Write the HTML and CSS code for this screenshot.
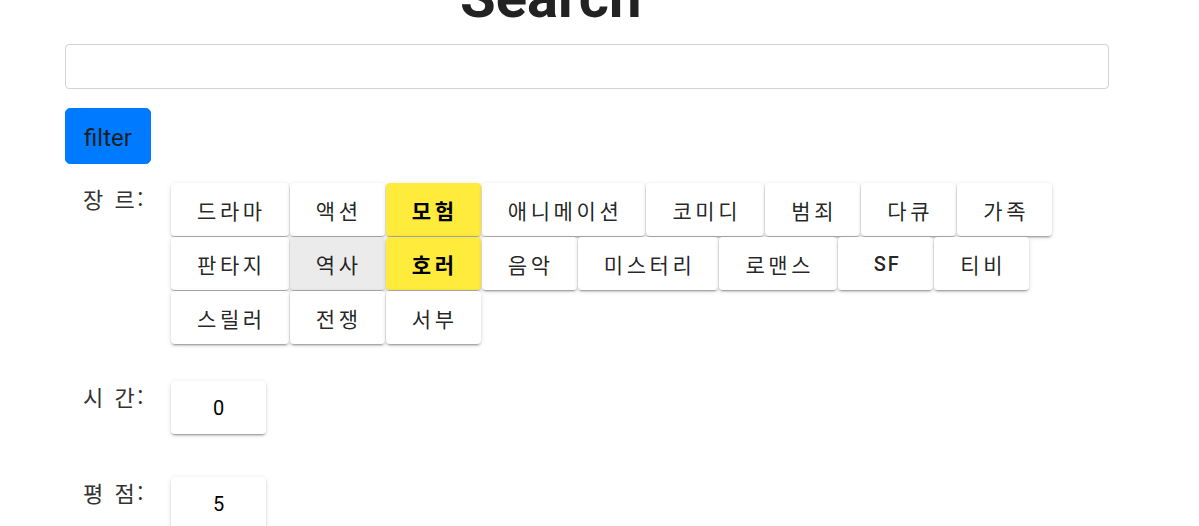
FILE: index.html
```html
<!DOCTYPE html>
<html lang="ko">
<head>
<meta charset="utf-8">
<title>Search</title>
<link rel="stylesheet" href="styles.css">
</head>
<body>
<div class="page">
  <h1 class="title">Search</h1>
  <input class="search-input" type="text">
  <button class="filter-btn">filter</button>

  <div class="section genre">
    <div class="label">장 르:</div>
    <div class="chips">
      <button class="chip">드라마</button>
      <button class="chip">액션</button>
      <button class="chip selected">모험</button>
      <button class="chip">애니메이션</button>
      <button class="chip">코미디</button>
      <button class="chip">범죄</button>
      <button class="chip">다큐</button>
      <button class="chip">가족</button>
      <button class="chip">판타지</button>
      <button class="chip hover">역사</button>
      <button class="chip selected">호러</button>
      <button class="chip">음악</button>
      <button class="chip">미스터리</button>
      <button class="chip">로맨스</button>
      <button class="chip latin">SF</button>
      <button class="chip">티비</button>
      <button class="chip">스릴러</button>
      <button class="chip">전쟁</button>
      <button class="chip">서부</button>
    </div>
  </div>

  <div class="section time">
    <div class="label">시 간:</div>
    <div class="chips">
      <button class="chip num">0</button>
    </div>
  </div>

  <div class="section rating">
    <div class="label">평 점:</div>
    <div class="chips">
      <button class="chip num">5</button>
    </div>
  </div>
</div>
</body>
</html>
```

FILE: styles.css
```css
* { box-sizing: border-box; }

html, body {
  margin: 0;
  padding: 0;
  background: #fff;
  overflow: hidden;
}

body {
  font-family: Roboto, "Noto Sans CJK KR", sans-serif;
  color: #212529;
}

.page {
  padding: 0 90px 0 65px;
}

.title {
  margin: -32px 0 18px;
  padding-left: 395px;
  font-size: 58px;
  line-height: 58px;
  font-weight: 700;
  color: #222;
}

.search-input {
  display: block;
  width: 100%;
  height: 45px;
  margin: 0;
  border: 1px solid #ced4da;
  border-radius: 4px;
  background: #fff;
  outline: none;
}

.filter-btn {
  display: block;
  margin: 19px 0 0;
  height: 56px;
  padding: 3px 18px 0;
  border: 1px solid #007bff;
  border-radius: 5px;
  background: #007bff;
  color: #1b1f24;
  font-family: Roboto, sans-serif;
  font-size: 24px;
  line-height: 36px;
  font-weight: 400;
}

.section {
  display: flex;
  align-items: flex-start;
}

.genre { margin-top: 19px; }
.time { margin-top: 37px; }
.rating { margin-top: 43px; }

.label {
  width: 106px;
  flex: none;
  padding: 0 0 0 18px;
  font-family: "Noto Sans CJK KR", sans-serif;
  font-size: 22px;
  line-height: 30px;
  letter-spacing: 2.5px;
  color: #333;
}

.chips {
  flex: 1;
  display: flex;
  flex-wrap: wrap;
  gap: 1px;
}

.chip {
  height: 53px;
  min-width: 95px;
  padding: 0 23px 0 26px;
  border: 0;
  border-radius: 4px;
  background: #fff;
  color: rgba(0, 0, 0, 0.87);
  font-family: Roboto, "Noto Sans CJK KR", sans-serif;
  font-size: 21px;
  font-weight: 400;
  letter-spacing: 3.6px;
  box-shadow: 0 3px 1px -2px rgba(0,0,0,0.2), 0 2px 2px 0 rgba(0,0,0,0.14), 0 1px 5px 0 rgba(0,0,0,0.12);
}

.chip.selected {
  background: #ffeb3b;
  color: #000;
  font-weight: 700;
}

.chip.hover {
  background: #ebebeb;
}

.chip.latin {
  font-size: 20px;
  font-weight: 500;
  letter-spacing: 2px;
}

.chip.num {
  font-size: 20px;
  font-weight: 400;
  color: #000;
  letter-spacing: 0;
  padding: 0;
}
```
